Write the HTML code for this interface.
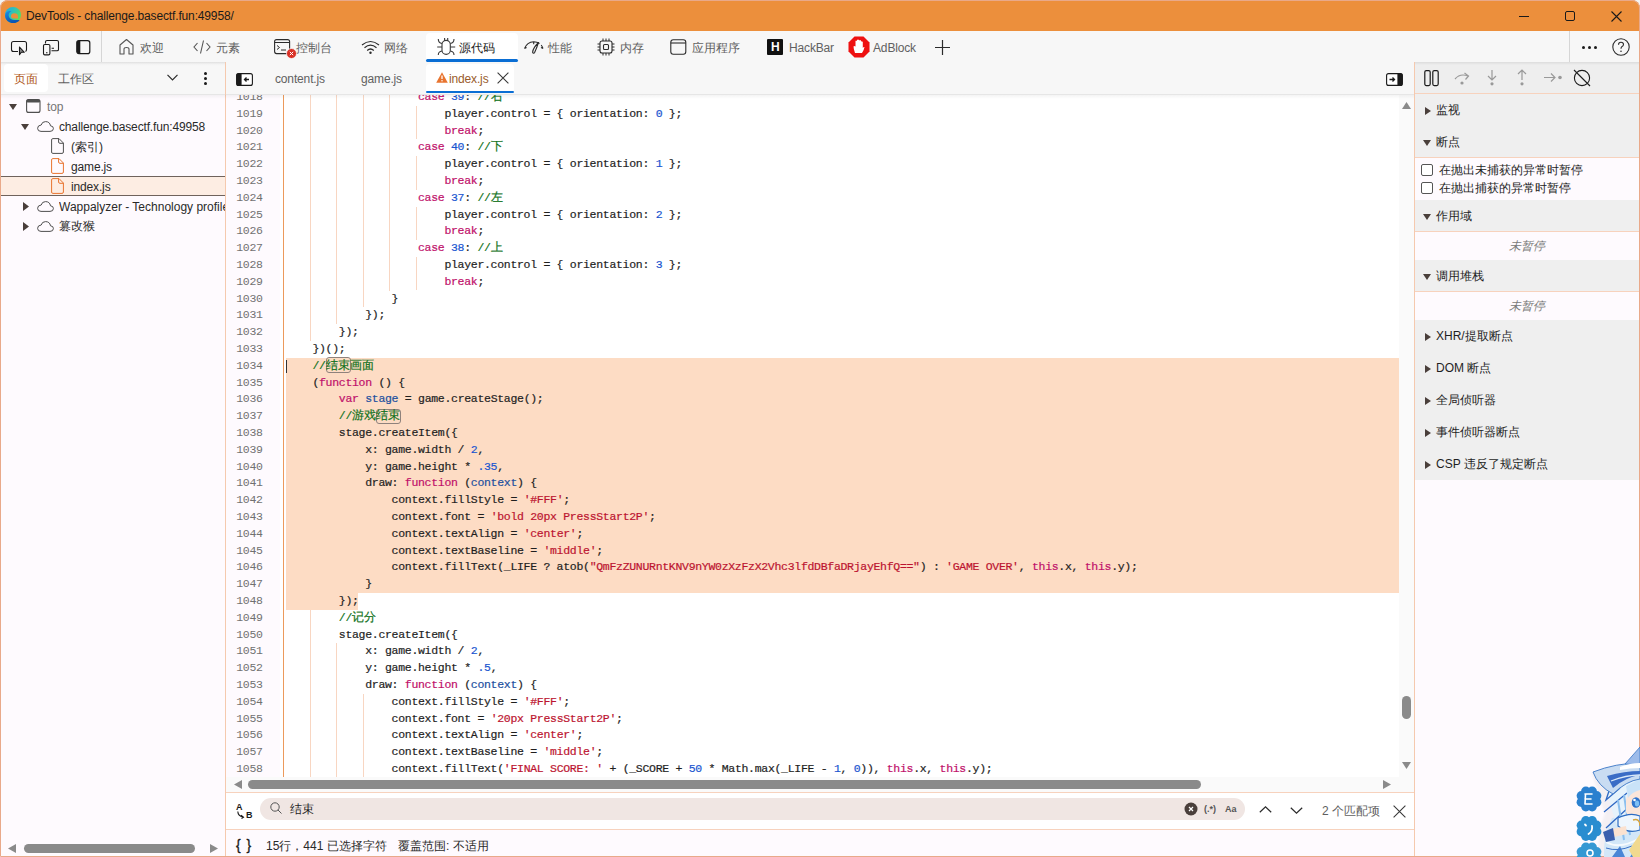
<!DOCTYPE html><html><head><meta charset="utf-8"><style>
*{box-sizing:border-box;margin:0;padding:0}
html,body{width:1640px;height:857px;overflow:hidden;background:#f3f3f3;font-family:"Liberation Sans",sans-serif;font-size:12px;color:#1f1f1f}
.a{position:absolute}
.t{position:absolute;white-space:pre;line-height:1}
svg{position:absolute;overflow:visible}
.code{position:absolute;font-family:"Liberation Mono",monospace;font-size:11.5px;letter-spacing:-0.3px;line-height:16.8px;height:16.8px;white-space:pre;color:#1f1f1f;-webkit-text-stroke:0.2px currentColor}
.cj{font-size:11.75px;letter-spacing:0}
.k{color:#c0106a}.n{color:#1a55d0}.c{color:#117220}.s{color:#bc1430}.v{color:#22509f}
.mb{position:absolute;border:1px solid #8f827c;border-radius:3px}
.ln{position:absolute;left:226px;width:36.6px;text-align:right;font-family:"Liberation Mono",monospace;font-size:11.5px;letter-spacing:-0.3px;line-height:16.8px;color:#717171}
.guide{position:absolute;width:1px;background:#f8d6c2}
.hdr{position:absolute;left:1415px;width:225px;height:32px;background:#efefef}
</style></head><body>
<div class="a" style="left:0;top:0;width:1640px;height:857px;background:#fefafe;border-radius:8px 8px 0 0"></div>
<div class="a" style="left:0;top:0;width:1640px;height:31px;background:#ec8f3c;border-radius:8px 8px 0 0"></div>
<svg style="left:5px;top:7px" width="16" height="16" viewBox="0 0 16 16">
<defs><linearGradient id="eg" x1="0" y1="0" x2="1" y2="0.6"><stop offset="0" stop-color="#1fa6ea"/><stop offset="0.5" stop-color="#2fc3b8"/><stop offset="1" stop-color="#5be05a"/></linearGradient>
<linearGradient id="eb" x1="0" y1="0" x2="0.3" y2="1"><stop offset="0" stop-color="#1c8fe6"/><stop offset="1" stop-color="#0a55b5"/></linearGradient></defs>
<circle cx="8" cy="8" r="8" fill="url(#eg)"/>
<path d="M0.1 8.5C0.3 4.5 3.5 3.2 6.5 4.2C4.2 5 3.3 7 3.8 9.3C4.4 12 7.2 13.3 10.5 13H14.6C13.3 15.2 10.8 16.1 8.3 16.1C3.8 16.1 0 12.8 0.1 8.5Z" fill="url(#eb)"/>
<path d="M6 9.2Q6 6.2 9.2 6.2Q13 6.2 13 9.6V11.4H8.4Q6 11.4 6 9.2Z" fill="#ec8f3c"/>
</svg>
<div class="t" style="left:26px;top:10px;font-size:12px;color:#1a1a1a;letter-spacing:-0.15px;">DevTools - challenge.basectf.fun:49958/</div>
<div class="a" style="left:1519px;top:16px;width:10px;height:1px;background:#1a1a1a"></div>
<div class="a" style="left:1565px;top:11px;width:10px;height:10px;border:1px solid #1a1a1a;border-radius:2px"></div>
<svg style="left:1611px;top:11px" width="11" height="11"><path d="M0.5 0.5L10.5 10.5M10.5 0.5L0.5 10.5" stroke="#1a1a1a" stroke-width="1.1"/></svg>
<div class="a" style="left:0;top:31px;width:1640px;height:31px;background:#f7f7f7"></div>
<div class="a" style="left:101px;top:31px;width:1px;height:31px;background:#d6d6d6"></div>
<div class="a" style="left:1569px;top:31px;width:1px;height:31px;background:#d6d6d6"></div>
<svg style="left:11px;top:40px" width="17" height="16" viewBox="0 0 17 16"><path d="M7 11.5H2.5Q0.5 11.5 0.5 9.5V3.5Q0.5 1.5 2.5 1.5H13.5Q15.5 1.5 15.5 3.5V9.5Q15.5 11 14.5 11.5" fill="none" stroke="#1a1a1a" stroke-width="1.1"/><path d="M8.5 7V14.8L10.3 12.3H13.3Z" fill="#888" stroke="#1a1a1a" stroke-width="1.1" stroke-linejoin="round"/></svg>
<svg style="left:43px;top:40px" width="17" height="16" viewBox="0 0 17 16"><path d="M2.5 3.5V2Q2.5 0.5 4 0.5H14Q15.5 0.5 15.5 2V9.5Q15.5 10.8 14 10.8H8.5" fill="none" stroke="#1a1a1a" stroke-width="1.1"/><rect x="0.5" y="4.5" width="6.4" height="10.4" rx="1.3" fill="#f7f7f7" stroke="#1a1a1a" stroke-width="1.1"/><path d="M3 12.7H4.5M8.6 8.3H11" stroke="#1a1a1a" stroke-width="1.1"/></svg>
<svg style="left:76px;top:40px" width="15" height="15" viewBox="0 0 15 15"><rect x="0.8" y="0.6" width="13" height="13" rx="2.2" fill="none" stroke="#1a1a1a" stroke-width="1.2"/><path d="M3 0.6H4.3V13.6H3Q0.8 13.6 0.8 11.4V2.8Q0.8 0.6 3 0.6Z" fill="#1a1a1a"/></svg>
<svg style="left:118px;top:38px" width="17" height="17" viewBox="0 0 17 17"><path d="M2 16V7L8.5 1.5L15 7V16H11V11Q11 9.5 8.5 9.5Q6 9.5 6 11V16Z" fill="none" stroke="#555" stroke-width="1.1" stroke-linejoin="round"/></svg>
<div class="t" style="left:140px;top:42px;font-size:12px;color:#616161;">欢迎</div>
<svg style="left:193px;top:40px" width="18" height="14" viewBox="0 0 18 14"><path d="M4.5 3L1 7L4.5 11M13.5 3L17 7L13.5 11M10.5 0.5L7.5 13.5" fill="none" stroke="#555" stroke-width="1.1"/></svg>
<div class="t" style="left:216px;top:42px;font-size:12px;color:#616161;">元素</div>
<svg style="left:274px;top:39px" width="24" height="20" viewBox="0 0 24 20"><rect x="0.6" y="0.6" width="15" height="14" rx="2" fill="none" stroke="#2b2b2b" stroke-width="1.1"/><path d="M0.6 3.5H15.6M3 6.5L5.5 8.5L3 10.5M7 11H12" fill="none" stroke="#2b2b2b" stroke-width="1"/><circle cx="17.5" cy="14.5" r="5" fill="#d93025" stroke="#f7f7f7" stroke-width="0.8"/><path d="M15.8 12.8L19.2 16.2M19.2 12.8L15.8 16.2" stroke="#fff" stroke-width="1"/></svg>
<div class="t" style="left:296px;top:42px;font-size:12px;color:#616161;">控制台</div>
<svg style="left:361px;top:40px" width="19" height="14" viewBox="0 0 19 14"><path d="M1 5Q9.5 -2 18 5M3.5 7.8Q9.5 2.5 15.5 7.8M6.2 10.5Q9.5 7.5 12.8 10.5" fill="none" stroke="#2b2b2b" stroke-width="1.2"/><circle cx="9.5" cy="12.8" r="1.2" fill="#2b2b2b"/></svg>
<div class="t" style="left:384px;top:42px;font-size:12px;color:#616161;">网络</div>
<div class="a" style="left:426px;top:33px;width:92px;height:29px;background:#ffffff;border-radius:4px 4px 0 0"></div>
<div class="a" style="left:426px;top:59px;width:92px;height:3px;background:#0a6ed4;border-radius:2px"></div>
<svg style="left:436px;top:37px" width="20" height="20" viewBox="0 0 20 20"><rect x="6" y="3.4" width="8.3" height="14" rx="4.1" fill="none" stroke="#3a3a3a" stroke-width="1.1"/><path d="M8.6 1V3.4M11.7 1V3.4M6 6.5Q2.3 6 2.3 2M14.3 6.5Q18 6 18 2M1.2 10H6M14.3 10H19.2M6 14Q2.3 14.5 2.3 18M14.3 14Q18 14.5 18 18" fill="none" stroke="#3a3a3a" stroke-width="1.1"/></svg>
<div class="t" style="left:459px;top:42px;font-size:12px;color:#1a1a1a;">源代码</div>
<svg style="left:523px;top:39px" width="21" height="16" viewBox="0 0 21 16"><path d="M1.5 9.5Q4 3 10.7 2.7Q14 2.8 16.5 4.5M18.2 6Q19.3 7.5 20 9.5M1.5 9.5L3.6 8.6M10.7 2.7V5.2M20 9.5L18 8.6" fill="none" stroke="#2b2b2b" stroke-width="1.1"/><path d="M9.6 13.2Q10 9 15.5 3.5Q13.5 9.5 11.6 13.6Q10.5 15 9.6 13.2Z" fill="none" stroke="#2b2b2b" stroke-width="1.1" stroke-linejoin="round"/></svg>
<div class="t" style="left:548px;top:42px;font-size:12px;color:#616161;">性能</div>
<svg style="left:597px;top:38px" width="18" height="18" viewBox="0 0 18 18"><rect x="3" y="3" width="12" height="12" rx="2" fill="none" stroke="#2b2b2b" stroke-width="1.1"/><rect x="6.5" y="6.5" width="5" height="5" rx="1" fill="none" stroke="#2b2b2b" stroke-width="1.1"/><path d="M6 0.5V3M9 0.5V3M12 0.5V3M6 15V17.5M9 15V17.5M12 15V17.5M0.5 6H3M0.5 9H3M0.5 12H3M15 6H17.5M15 9H17.5M15 12H17.5" stroke="#2b2b2b" stroke-width="1"/></svg>
<div class="t" style="left:620px;top:42px;font-size:12px;color:#616161;">内存</div>
<svg style="left:670px;top:39px" width="17" height="16" viewBox="0 0 17 16"><rect x="0.8" y="0.8" width="15" height="14.4" rx="2.5" fill="none" stroke="#2b2b2b" stroke-width="1.1"/><path d="M0.8 4H15.8" stroke="#2b2b2b" stroke-width="1.1"/></svg>
<div class="t" style="left:692px;top:42px;font-size:12px;color:#616161;">应用程序</div>
<div class="a" style="left:767px;top:39px;width:16px;height:16px;background:#111;border-radius:1px"></div>
<div class="t" style="left:771px;top:41px;font-size:12px;font-weight:bold;color:#fff">H</div>
<div class="t" style="left:789px;top:42px;font-size:12px;color:#616161;letter-spacing:-0.15px;">HackBar</div>
<svg style="left:848px;top:36px" width="22" height="22" viewBox="0 0 22 22"><path d="M6.5 0.5H15.5L21.5 6.5V15.5L15.5 21.5H6.5L0.5 15.5V6.5Z" fill="#e11"/><path d="M7 17Q5.5 13 5.5 10.5Q6 9.5 7.5 10.5V5Q8 4 9 5V4Q10 3 11 4V4.5Q12 3.5 13 4.5V5.5Q14 5 14.8 6V12Q15.5 10.5 16.5 11Q16 14 14 17Z" fill="#fff"/></svg>
<div class="t" style="left:873px;top:42px;font-size:12px;color:#616161;letter-spacing:-0.15px;">AdBlock</div>
<svg style="left:935px;top:40px" width="15" height="15"><path d="M7.5 0V15M0 7.5H15" stroke="#2b2b2b" stroke-width="1.2"/></svg>
<div class="a" style="left:1582px;top:46px;width:3px;height:3px;border-radius:50%;background:#1a1a1a"></div>
<div class="a" style="left:1588px;top:46px;width:3px;height:3px;border-radius:50%;background:#1a1a1a"></div>
<div class="a" style="left:1594px;top:46px;width:3px;height:3px;border-radius:50%;background:#1a1a1a"></div>
<svg style="left:1612px;top:38px" width="18" height="18" viewBox="0 0 18 18"><circle cx="9" cy="9" r="8.2" fill="none" stroke="#2b2b2b" stroke-width="1.1"/><path d="M6.5 6.8Q6.5 4.3 9 4.3Q11.5 4.3 11.5 6.5Q11.5 8 9.8 8.8Q9 9.3 9 10.8" fill="none" stroke="#2b2b2b" stroke-width="1.1"/><circle cx="9" cy="13.2" r="0.8" fill="#2b2b2b"/></svg>
<div class="a" style="left:0;top:62px;width:225px;height:32px;background:#f7f7f7"></div>
<div class="a" style="left:0;top:62px;width:1640px;height:4px;background:linear-gradient(#dedede,#e9e9e9 25%,#f3f3f3 60%,rgba(247,247,247,0))"></div>
<div class="a" style="left:4px;top:64px;width:44px;height:28px;background:#fff;border-radius:4px"></div>
<div class="t" style="left:14px;top:73px;font-size:12px;color:#b05a1c;">页面</div>
<div class="t" style="left:58px;top:73px;font-size:12px;color:#616161;">工作区</div>
<svg style="left:167px;top:74px" width="11" height="7"><path d="M0.5 0.8L5.5 5.8L10.5 0.8" fill="none" stroke="#2b2b2b" stroke-width="1.2"/></svg>
<div class="a" style="left:203.5px;top:72px;width:3px;height:3px;border-radius:50%;background:#1a1a1a"></div>
<div class="a" style="left:203.5px;top:77px;width:3px;height:3px;border-radius:50%;background:#1a1a1a"></div>
<div class="a" style="left:203.5px;top:82px;width:3px;height:3px;border-radius:50%;background:#1a1a1a"></div>
<div class="a" style="left:0;top:94px;width:225px;height:1px;background:#e6e6e6"></div>
<svg style="left:9px;top:104px" width="8" height="6"><path d="M0 0H8L4.0 6Z" fill="#4a3f3b"/></svg>
<svg style="left:26px;top:99px" width="15" height="14" viewBox="0 0 15 14"><rect x="0.6" y="0.6" width="13.4" height="12.8" rx="2" fill="none" stroke="#4f4f4f" stroke-width="1.1"/><rect x="0.6" y="0.6" width="13.4" height="3" rx="1" fill="#4f4f4f"/></svg>
<div class="t" style="left:47px;top:101px;font-size:12px;color:#757575;letter-spacing:-0.15px;">top</div>
<svg style="left:21px;top:124px" width="8" height="6"><path d="M0 0H8L4.0 6Z" fill="#4a3f3b"/></svg>
<svg style="left:37px;top:121px" width="17" height="11" viewBox="0 0 17 11"><path d="M4 10.4H13Q16.4 10.4 16.4 7.5Q16.4 5 13.5 4.8Q12.8 0.6 8.5 0.6Q5 0.6 4.2 4Q0.6 4.3 0.6 7.3Q0.6 10.4 4 10.4Z" fill="none" stroke="#4f4f4f" stroke-width="1"/></svg>
<div class="t" style="left:59px;top:121px;font-size:12px;color:#2a2a2a;letter-spacing:-0.15px;">challenge.basectf.fun:49958</div>
<svg style="left:51px;top:138px" width="13" height="16" viewBox="0 0 13 16"><path d="M1.8 0.6H8L12.4 5V14Q12.4 15.4 11 15.4H1.8Q0.6 15.4 0.6 14V2Q0.6 0.6 1.8 0.6Z M7.6 0.6V4Q7.6 5.3 8.9 5.3H12.4" fill="none" stroke="#4f4f4f" stroke-width="1"/></svg>
<div class="t" style="left:71px;top:141px;font-size:12px;color:#2a2a2a;">(索引)</div>
<svg style="left:51px;top:158px" width="13" height="16" viewBox="0 0 13 16"><path d="M1.8 0.6H8L12.4 5V14Q12.4 15.4 11 15.4H1.8Q0.6 15.4 0.6 14V2Q0.6 0.6 1.8 0.6Z M7.6 0.6V4Q7.6 5.3 8.9 5.3H12.4" fill="none" stroke="#e8742f" stroke-width="1"/></svg>
<div class="t" style="left:71px;top:161px;font-size:12px;color:#2a2a2a;letter-spacing:-0.15px;">game.js</div>
<div class="a" style="left:1px;top:176px;width:224px;height:20px;background:#fdede3;border-top:1px solid #6f625c;border-bottom:1px solid #6f625c"></div>
<svg style="left:51px;top:178px" width="13" height="16" viewBox="0 0 13 16"><path d="M1.8 0.6H8L12.4 5V14Q12.4 15.4 11 15.4H1.8Q0.6 15.4 0.6 14V2Q0.6 0.6 1.8 0.6Z M7.6 0.6V4Q7.6 5.3 8.9 5.3H12.4" fill="none" stroke="#e8742f" stroke-width="1"/></svg>
<div class="t" style="left:71px;top:181px;font-size:12px;color:#2a2a2a;letter-spacing:-0.15px;">index.js</div>
<svg style="left:23px;top:202px" width="6" height="9"><path d="M0 0L6 4.5L0 9Z" fill="#4a3f3b"/></svg>
<svg style="left:37px;top:201px" width="17" height="11" viewBox="0 0 17 11"><path d="M4 10.4H13Q16.4 10.4 16.4 7.5Q16.4 5 13.5 4.8Q12.8 0.6 8.5 0.6Q5 0.6 4.2 4Q0.6 4.3 0.6 7.3Q0.6 10.4 4 10.4Z" fill="none" stroke="#4f4f4f" stroke-width="1"/></svg>
<div class="a" style="left:59px;top:200px;width:166px;height:16px;overflow:hidden"><div class="t" style="left:0;top:1px;font-size:12px;color:#2a2a2a">Wappalyzer - Technology profiler</div></div>
<svg style="left:23px;top:222px" width="6" height="9"><path d="M0 0L6 4.5L0 9Z" fill="#4a3f3b"/></svg>
<svg style="left:37px;top:221px" width="17" height="11" viewBox="0 0 17 11"><path d="M4 10.4H13Q16.4 10.4 16.4 7.5Q16.4 5 13.5 4.8Q12.8 0.6 8.5 0.6Q5 0.6 4.2 4Q0.6 4.3 0.6 7.3Q0.6 10.4 4 10.4Z" fill="none" stroke="#4f4f4f" stroke-width="1"/></svg>
<div class="t" style="left:59px;top:220px;font-size:12px;color:#2a2a2a;">篡改猴</div>
<svg style="left:8px;top:844px" width="8" height="9"><path d="M8 0V9L0 4.5Z" fill="#8a8a8a"/></svg>
<div class="a" style="left:24px;top:844px;width:171px;height:9px;background:#8a8a8a;border-radius:4.5px"></div>
<svg style="left:210px;top:844px" width="8" height="9"><path d="M0 0V9L8 4.5Z" fill="#8a8a8a"/></svg>
<div class="a" style="left:225px;top:62px;width:1px;height:795px;background:#f5c9ae"></div>
<div class="a" style="left:226px;top:62px;width:1188px;height:32px;background:#f7f7f7"></div>
<div class="a" style="left:226px;top:94px;width:1188px;height:1px;background:#e6e6e6"></div>
<svg style="left:236px;top:73px" width="17" height="13" viewBox="0 0 17 13"><rect x="0.6" y="0.6" width="15.8" height="11.8" rx="2" fill="#fff" stroke="#1a1a1a" stroke-width="1.1"/><rect x="0.6" y="0.6" width="5" height="11.8" rx="1" fill="#1a1a1a"/><path d="M13 6.5H8.5M10.5 4.5L8.5 6.5L10.5 8.5" fill="none" stroke="#1a1a1a" stroke-width="1.3"/></svg>
<div class="t" style="left:275px;top:73px;font-size:12px;color:#616161;letter-spacing:-0.15px;">content.js</div>
<div class="t" style="left:361px;top:73px;font-size:12px;color:#616161;letter-spacing:-0.15px;">game.js</div>
<div class="a" style="left:426px;top:64px;width:88px;height:29px;background:#ffffff;border-radius:4px 4px 0 0"></div>
<div class="a" style="left:426px;top:91px;width:88px;height:2px;background:#0a6ed4;border-radius:1px"></div>
<svg style="left:436px;top:72px" width="12" height="11" viewBox="0 0 12 11"><path d="M6 0.3L11.8 10.7H0.2Z" fill="#e8742f"/><path d="M6 3.5V7" stroke="#fff" stroke-width="1.3"/><circle cx="6" cy="8.8" r="0.75" fill="#fff"/></svg>
<div class="t" style="left:449px;top:73px;font-size:12px;color:#9a5c2c;letter-spacing:-0.15px;">index.js</div>
<svg style="left:497px;top:72px" width="12" height="12"><path d="M0.6 0.6L11.4 11.4M11.4 0.6L0.6 11.4" stroke="#3a3a3a" stroke-width="1.1"/></svg>
<svg style="left:1386px;top:73px" width="17" height="13" viewBox="0 0 17 13"><rect x="0.6" y="0.6" width="15.8" height="11.8" rx="2" fill="#fff" stroke="#1a1a1a" stroke-width="1.1"/><rect x="11.4" y="0.6" width="5" height="11.8" rx="1" fill="#1a1a1a"/><path d="M3.5 6.5H8.5M6.5 4.5L8.5 6.5L6.5 8.5" fill="none" stroke="#1a1a1a" stroke-width="1.3"/></svg>
<div class="a" style="left:226px;top:95px;width:1188px;height:682px;background:#ffffff;overflow:hidden">
<div class="a" style="left:0;top:0;width:54px;height:683px;background:#fefafe"></div>
<div class="a" style="left:57px;top:0;width:1px;height:683px;background:#ec9a5b"></div>
<div class="a" style="left:60.0px;top:262.70000000000005px;width:1113.0px;height:235.19999999999993px;background:#fddcc4"></div>
<div class="a" style="left:60.0px;top:497.9px;width:72.0px;height:16.8px;background:#fddcc4"></div>
<div class="guide" style="left:84px;top:-6.099999999999994px;height:252.0px"></div>
<div class="guide" style="left:110px;top:-6.099999999999994px;height:235.20000000000002px"></div>
<div class="guide" style="left:137px;top:-6.099999999999994px;height:218.4px"></div>
<div class="guide" style="left:163px;top:-6.099999999999994px;height:201.60000000000002px"></div>
<div class="guide" style="left:190px;top:10.700000000000003px;height:33.6px"></div>
<div class="guide" style="left:190px;top:61.10000000000002px;height:33.6px"></div>
<div class="guide" style="left:190px;top:111.5px;height:33.6px"></div>
<div class="guide" style="left:190px;top:161.89999999999998px;height:33.6px"></div>
<div class="guide" style="left:84px;top:514.7px;height:168.0px"></div>
<div class="guide" style="left:110px;top:548.3px;height:134.4px"></div>
<div class="guide" style="left:137px;top:598.7px;height:84.0px"></div>
<div class="mb" style="left:99.5px;top:262.3px;width:25px;height:15.5px"></div>
<div class="mb" style="left:149.5px;top:313.5px;width:25px;height:15.5px"></div>
<div class="a" style="left:60px;top:264.70000000000005px;width:1px;height:13px;background:#333"></div>
<div class="ln" style="left:0;top:-6.099999999999994px">1018</div>
<div class="code" style="left:192.0px;top:-6.099999999999994px"><span class="k">case</span> <span class="n">39</span>: <span class="c">//<span class="cj">右</span></span></div>
<div class="ln" style="left:0;top:10.700000000000003px">1019</div>
<div class="code" style="left:218.39999999999998px;top:10.700000000000003px">player.control = { orientation: <span class="n">0</span> };</div>
<div class="ln" style="left:0;top:27.5px">1020</div>
<div class="code" style="left:218.39999999999998px;top:27.5px"><span class="k">break</span>;</div>
<div class="ln" style="left:0;top:44.30000000000001px">1021</div>
<div class="code" style="left:192.0px;top:44.30000000000001px"><span class="k">case</span> <span class="n">40</span>: <span class="c">//<span class="cj">下</span></span></div>
<div class="ln" style="left:0;top:61.10000000000002px">1022</div>
<div class="code" style="left:218.39999999999998px;top:61.10000000000002px">player.control = { orientation: <span class="n">1</span> };</div>
<div class="ln" style="left:0;top:77.9px">1023</div>
<div class="code" style="left:218.39999999999998px;top:77.9px"><span class="k">break</span>;</div>
<div class="ln" style="left:0;top:94.70000000000002px">1024</div>
<div class="code" style="left:192.0px;top:94.70000000000002px"><span class="k">case</span> <span class="n">37</span>: <span class="c">//<span class="cj">左</span></span></div>
<div class="ln" style="left:0;top:111.5px">1025</div>
<div class="code" style="left:218.39999999999998px;top:111.5px">player.control = { orientation: <span class="n">2</span> };</div>
<div class="ln" style="left:0;top:128.3px">1026</div>
<div class="code" style="left:218.39999999999998px;top:128.3px"><span class="k">break</span>;</div>
<div class="ln" style="left:0;top:145.10000000000002px">1027</div>
<div class="code" style="left:192.0px;top:145.10000000000002px"><span class="k">case</span> <span class="n">38</span>: <span class="c">//<span class="cj">上</span></span></div>
<div class="ln" style="left:0;top:161.89999999999998px">1028</div>
<div class="code" style="left:218.39999999999998px;top:161.89999999999998px">player.control = { orientation: <span class="n">3</span> };</div>
<div class="ln" style="left:0;top:178.70000000000005px">1029</div>
<div class="code" style="left:218.39999999999998px;top:178.70000000000005px"><span class="k">break</span>;</div>
<div class="ln" style="left:0;top:195.5px">1030</div>
<div class="code" style="left:165.6px;top:195.5px">}</div>
<div class="ln" style="left:0;top:212.3px">1031</div>
<div class="code" style="left:139.2px;top:212.3px">});</div>
<div class="ln" style="left:0;top:229.10000000000002px">1032</div>
<div class="code" style="left:112.8px;top:229.10000000000002px">});</div>
<div class="ln" style="left:0;top:245.89999999999998px">1033</div>
<div class="code" style="left:86.4px;top:245.89999999999998px">})();</div>
<div class="ln" style="left:0;top:262.70000000000005px">1034</div>
<div class="code" style="left:86.4px;top:262.70000000000005px"><span class="c">//</span><span class="c m"><span class="cj">结束</span></span><span class="c"><span class="cj">画面</span></span></div>
<div class="ln" style="left:0;top:279.5px">1035</div>
<div class="code" style="left:86.4px;top:279.5px">(<span class="k">function</span> () {</div>
<div class="ln" style="left:0;top:296.30000000000007px">1036</div>
<div class="code" style="left:112.8px;top:296.30000000000007px"><span class="k">var</span> <span class="v">stage</span> = game.createStage();</div>
<div class="ln" style="left:0;top:313.1px">1037</div>
<div class="code" style="left:112.8px;top:313.1px"><span class="c">//<span class="cj">游戏</span></span><span class="c m"><span class="cj">结束</span></span></div>
<div class="ln" style="left:0;top:329.9px">1038</div>
<div class="code" style="left:112.8px;top:329.9px">stage.createItem({</div>
<div class="ln" style="left:0;top:346.70000000000005px">1039</div>
<div class="code" style="left:139.2px;top:346.70000000000005px">x: game.width / <span class="n">2</span>,</div>
<div class="ln" style="left:0;top:363.5px">1040</div>
<div class="code" style="left:139.2px;top:363.5px">y: game.height * <span class="n">.35</span>,</div>
<div class="ln" style="left:0;top:380.30000000000007px">1041</div>
<div class="code" style="left:139.2px;top:380.30000000000007px">draw: <span class="k">function</span> (<span class="v">context</span>) {</div>
<div class="ln" style="left:0;top:397.1px">1042</div>
<div class="code" style="left:165.6px;top:397.1px">context.fillStyle = <span class="s">'#FFF'</span>;</div>
<div class="ln" style="left:0;top:413.9px">1043</div>
<div class="code" style="left:165.6px;top:413.9px">context.font = <span class="s">'bold 20px PressStart2P'</span>;</div>
<div class="ln" style="left:0;top:430.70000000000005px">1044</div>
<div class="code" style="left:165.6px;top:430.70000000000005px">context.textAlign = <span class="s">'center'</span>;</div>
<div class="ln" style="left:0;top:447.5px">1045</div>
<div class="code" style="left:165.6px;top:447.5px">context.textBaseline = <span class="s">'middle'</span>;</div>
<div class="ln" style="left:0;top:464.30000000000007px">1046</div>
<div class="code" style="left:165.6px;top:464.30000000000007px">context.fillText(_LIFE ? atob(<span class="s">"QmFzZUNURntKNV9nYW0zXzFzX2Vhc3lfdDBfaDRjayEhfQ=="</span>) : <span class="s">'GAME OVER'</span>, <span class="k">this</span>.x, <span class="k">this</span>.y);</div>
<div class="ln" style="left:0;top:481.1px">1047</div>
<div class="code" style="left:139.2px;top:481.1px">}</div>
<div class="ln" style="left:0;top:497.9px">1048</div>
<div class="code" style="left:112.8px;top:497.9px">});</div>
<div class="ln" style="left:0;top:514.7px">1049</div>
<div class="code" style="left:112.8px;top:514.7px"><span class="c">//<span class="cj">记分</span></span></div>
<div class="ln" style="left:0;top:531.5px">1050</div>
<div class="code" style="left:112.8px;top:531.5px">stage.createItem({</div>
<div class="ln" style="left:0;top:548.3px">1051</div>
<div class="code" style="left:139.2px;top:548.3px">x: game.width / <span class="n">2</span>,</div>
<div class="ln" style="left:0;top:565.1px">1052</div>
<div class="code" style="left:139.2px;top:565.1px">y: game.height * <span class="n">.5</span>,</div>
<div class="ln" style="left:0;top:581.9px">1053</div>
<div class="code" style="left:139.2px;top:581.9px">draw: <span class="k">function</span> (<span class="v">context</span>) {</div>
<div class="ln" style="left:0;top:598.7px">1054</div>
<div class="code" style="left:165.6px;top:598.7px">context.fillStyle = <span class="s">'#FFF'</span>;</div>
<div class="ln" style="left:0;top:615.5px">1055</div>
<div class="code" style="left:165.6px;top:615.5px">context.font = <span class="s">'20px PressStart2P'</span>;</div>
<div class="ln" style="left:0;top:632.3px">1056</div>
<div class="code" style="left:165.6px;top:632.3px">context.textAlign = <span class="s">'center'</span>;</div>
<div class="ln" style="left:0;top:649.1px">1057</div>
<div class="code" style="left:165.6px;top:649.1px">context.textBaseline = <span class="s">'middle'</span>;</div>
<div class="ln" style="left:0;top:665.9px">1058</div>
<div class="code" style="left:165.6px;top:665.9px">context.fillText(<span class="s">'FINAL SCORE: '</span> + (_SCORE + <span class="n">50</span> * Math.max(_LIFE - <span class="n">1</span>, <span class="n">0</span>)), <span class="k">this</span>.x, <span class="k">this</span>.y);</div>
<div class="a" style="left:1173px;top:0;width:15px;height:683px;background:#fafafa"></div>
<svg style="left:1176px;top:7px" width="9" height="7"><path d="M0 7H9L4.5 0Z" fill="#8a8a8a"/></svg>
<div class="a" style="left:1176px;top:601px;width:9px;height:23px;background:#8a8a8a;border-radius:4.5px"></div>
<svg style="left:1176px;top:667px" width="9" height="7"><path d="M0 0H9L4.5 7Z" fill="#8a8a8a"/></svg>
</div>
<div class="a" style="left:0;top:95px;width:1414px;height:4px;background:linear-gradient(rgba(0,0,0,0.045),rgba(0,0,0,0))"></div>
<div class="a" style="left:226px;top:777px;width:1188px;height:15px;background:#fafafa"></div>
<svg style="left:234px;top:780px" width="8" height="9"><path d="M8 0V9L0 4.5Z" fill="#8a8a8a"/></svg>
<div class="a" style="left:248px;top:780px;width:953px;height:9px;background:#8a8a8a;border-radius:4.5px"></div>
<svg style="left:1383px;top:780px" width="8" height="9"><path d="M0 0V9L8 4.5Z" fill="#8a8a8a"/></svg>
<div class="a" style="left:226px;top:792px;width:1188px;height:1px;background:#f7d2bd"></div>
<div class="a" style="left:226px;top:793px;width:1188px;height:36px;background:#fff"></div>
<div class="t" style="left:236px;top:803px;font-size:9px;font-weight:bold;color:#1a1a1a">A</div>
<div class="t" style="left:246px;top:811px;font-size:9px;font-weight:bold;color:#1a1a1a">B</div>
<svg style="left:237px;top:811px" width="9" height="8"><path d="M0.8 0.5Q1 5 6 6M4 4.2L6.5 6.2L4.5 7.5" fill="none" stroke="#1a1a1a" stroke-width="1.1"/></svg>
<div class="a" style="left:260px;top:798px;width:985px;height:22px;background:#f0e6e3;border-radius:11px"></div>
<svg style="left:270px;top:802px" width="13" height="12"><circle cx="5" cy="5" r="4.2" fill="none" stroke="#555" stroke-width="1"/><path d="M8 8L11.5 11.5" stroke="#555" stroke-width="1"/></svg>
<div class="t" style="left:290px;top:803px;font-size:12px;color:#1f1f1f;">结束</div>
<svg style="left:1184px;top:802px" width="14" height="14"><circle cx="7" cy="7" r="6.5" fill="#4a3f3b"/><path d="M5 5L9 9M9 5L5 9" stroke="#fff" stroke-width="1.2"/></svg>
<div class="t" style="left:1204px;top:805px;font-size:9px;font-weight:bold;color:#555">(.*)</div>
<div class="t" style="left:1225px;top:805px;font-size:9px;font-weight:bold;color:#555">Aa</div>
<svg style="left:1259px;top:806px" width="13" height="7"><path d="M0.8 6.2L6.5 0.8L12.2 6.2" fill="none" stroke="#2b2b2b" stroke-width="1.2"/></svg>
<svg style="left:1290px;top:807px" width="13" height="7"><path d="M0.8 0.8L6.5 6.2L12.2 0.8" fill="none" stroke="#2b2b2b" stroke-width="1.2"/></svg>
<div class="t" style="left:1322px;top:805px;font-size:12px;color:#5f5f5f;">2 个匹配项</div>
<svg style="left:1393px;top:805px" width="13" height="13"><path d="M0.6 0.6L12.4 12.4M12.4 0.6L0.6 12.4" stroke="#3a3a3a" stroke-width="1.1"/></svg>
<div class="a" style="left:226px;top:829px;width:1188px;height:1px;background:#f7d2bd"></div>
<div class="a" style="left:226px;top:830px;width:1188px;height:27px;background:#fefafe"></div>
<div class="t" style="left:236px;top:838px;font-size:14px;color:#1a1a1a;-webkit-text-stroke:0.3px #1a1a1a">{</div>
<div class="t" style="left:246.5px;top:838px;font-size:14px;color:#1a1a1a;-webkit-text-stroke:0.3px #1a1a1a">}</div>
<div class="t" style="left:266px;top:840px;font-size:12px;color:#2a2a2a;">15行，441 已选择字符</div>
<div class="t" style="left:398px;top:840px;font-size:12px;color:#2a2a2a;">覆盖范围: 不适用</div>
<div class="a" style="left:1414px;top:62px;width:226px;height:795px;background:#fefafe"></div>
<div class="a" style="left:1414px;top:62px;width:226px;height:31px;background:#eeeeee"></div>
<div class="a" style="left:1414px;top:62px;width:226px;height:3px;background:linear-gradient(#dcdcdc,rgba(238,238,238,0))"></div>
<div class="a" style="left:1414px;top:93px;width:226px;height:1px;background:#f7d2bd"></div>
<svg style="left:1424px;top:70px" width="17" height="17" viewBox="0 0 17 17"><rect x="0.8" y="0.6" width="5.4" height="15" rx="1.5" fill="none" stroke="#1a1a1a" stroke-width="1.2"/><rect x="8.8" y="0.6" width="5.4" height="15" rx="1.5" fill="none" stroke="#1a1a1a" stroke-width="1.2"/></svg>
<svg style="left:1454px;top:70px" width="18" height="16" viewBox="0 0 18 16"><path d="M1 9Q6 3 14 6" fill="none" stroke="#999" stroke-width="1.2"/><path d="M10.5 3L14.5 6L11.5 9.5" fill="none" stroke="#999" stroke-width="1.2"/><circle cx="8" cy="13" r="1.6" fill="#999"/></svg>
<svg style="left:1486px;top:69px" width="12" height="17" viewBox="0 0 12 17"><path d="M6 1V11M2 7L6 11L10 7" fill="none" stroke="#999" stroke-width="1.2"/><circle cx="6" cy="14.8" r="1.6" fill="#999"/></svg>
<svg style="left:1516px;top:69px" width="12" height="17" viewBox="0 0 12 17"><path d="M6 11V1M2 5L6 1L10 5" fill="none" stroke="#999" stroke-width="1.2"/><circle cx="6" cy="14.8" r="1.6" fill="#999"/></svg>
<svg style="left:1543px;top:71px" width="20" height="13" viewBox="0 0 20 13"><path d="M1 6.5H12M8 2.5L12 6.5L8 10.5" fill="none" stroke="#999" stroke-width="1.2"/><circle cx="17" cy="6.5" r="1.8" fill="#999"/></svg>
<svg style="left:1573px;top:69px" width="18" height="18" viewBox="0 0 18 18"><circle cx="9" cy="9" r="7.6" fill="none" stroke="#1a1a1a" stroke-width="1.1"/><path d="M1 1L17 17" stroke="#1a1a1a" stroke-width="1.1"/></svg>
<div class="hdr" style="top:94px"></div>
<svg style="left:1425px;top:107px" width="6" height="8"><path d="M0 0L6 4.0L0 8Z" fill="#4a3f3b"/></svg>
<div class="t" style="left:1436px;top:104px;font-size:12px;color:#1f1f1f;">监视</div>
<div class="hdr" style="top:126px"></div>
<svg style="left:1423px;top:140px" width="8" height="6"><path d="M0 0H8L4.0 6Z" fill="#4a3f3b"/></svg>
<div class="t" style="left:1436px;top:136px;font-size:12px;color:#1f1f1f;">断点</div>
<div class="a" style="left:1414px;top:157px;width:226px;height:1px;background:#f7d2bd"></div>
<div class="a" style="left:1421px;top:164px;width:12px;height:12px;border:1px solid #555;border-radius:2px;background:#fff"></div>
<div class="t" style="left:1439px;top:164px;font-size:12px;color:#1f1f1f;">在抛出未捕获的异常时暂停</div>
<div class="a" style="left:1421px;top:182px;width:12px;height:12px;border:1px solid #555;border-radius:2px;background:#fff"></div>
<div class="t" style="left:1439px;top:182px;font-size:12px;color:#1f1f1f;">在抛出捕获的异常时暂停</div>
<div class="a" style="left:1414px;top:200px;width:226px;height:1px;background:#f7d2bd"></div>
<div class="hdr" style="top:200px"></div>
<svg style="left:1423px;top:214px" width="8" height="6"><path d="M0 0H8L4.0 6Z" fill="#4a3f3b"/></svg>
<div class="t" style="left:1436px;top:210px;font-size:12px;color:#1f1f1f;">作用域</div>
<div class="a" style="left:1414px;top:231px;width:226px;height:1px;background:#f7d2bd"></div>
<div class="t" style="left:1509px;top:240px;font-size:12px;color:#7a7a7a;font-style:italic">未暂停</div>
<div class="hdr" style="top:260px"></div>
<svg style="left:1423px;top:274px" width="8" height="6"><path d="M0 0H8L4.0 6Z" fill="#4a3f3b"/></svg>
<div class="t" style="left:1436px;top:270px;font-size:12px;color:#1f1f1f;">调用堆栈</div>
<div class="a" style="left:1414px;top:291px;width:226px;height:1px;background:#f7d2bd"></div>
<div class="t" style="left:1509px;top:300px;font-size:12px;color:#7a7a7a;font-style:italic">未暂停</div>
<div class="hdr" style="top:320px"></div>
<svg style="left:1425px;top:333px" width="6" height="8"><path d="M0 0L6 4.0L0 8Z" fill="#4a3f3b"/></svg>
<div class="t" style="left:1436px;top:330px;font-size:12px;color:#1f1f1f;">XHR/提取断点</div>
<div class="hdr" style="top:352px"></div>
<svg style="left:1425px;top:365px" width="6" height="8"><path d="M0 0L6 4.0L0 8Z" fill="#4a3f3b"/></svg>
<div class="t" style="left:1436px;top:362px;font-size:12px;color:#1f1f1f;">DOM 断点</div>
<div class="hdr" style="top:384px"></div>
<svg style="left:1425px;top:397px" width="6" height="8"><path d="M0 0L6 4.0L0 8Z" fill="#4a3f3b"/></svg>
<div class="t" style="left:1436px;top:394px;font-size:12px;color:#1f1f1f;">全局侦听器</div>
<div class="hdr" style="top:416px"></div>
<svg style="left:1425px;top:429px" width="6" height="8"><path d="M0 0L6 4.0L0 8Z" fill="#4a3f3b"/></svg>
<div class="t" style="left:1436px;top:426px;font-size:12px;color:#1f1f1f;">事件侦听器断点</div>
<div class="hdr" style="top:448px"></div>
<svg style="left:1425px;top:461px" width="6" height="8"><path d="M0 0L6 4.0L0 8Z" fill="#4a3f3b"/></svg>
<div class="t" style="left:1436px;top:458px;font-size:12px;color:#1f1f1f;">CSP 违反了规定断点</div>
<div class="a" style="left:1414px;top:62px;width:1px;height:795px;background:#f5c9ae"></div>
<div class="a" style="left:0;top:0;width:1640px;height:857px;border:1px solid #e9a98a;border-radius:8px 8px 0 0;pointer-events:none"></div>
<svg style="left:1560px;top:730px" width="80" height="127" viewBox="1560 730 80 127"><defs><filter id="sh" x="-20%" y="-20%" width="140%" height="140%"><feGaussianBlur stdDeviation="1.2"/></filter></defs><path d="M1593 772Q1615 764 1640 762V857H1600Q1598 830 1606 812Q1598 790 1593 772Z" fill="#000" opacity="0.04" filter="url(#sh)" transform="translate(-1,1)"/><circle cx="1589" cy="799" r="9.5" fill="#2a80cf"/><circle cx="1596.58" cy="802.14" r="4.8" fill="#2a80cf"/><circle cx="1592.14" cy="806.58" r="4.8" fill="#2a80cf"/><circle cx="1585.86" cy="806.58" r="4.8" fill="#2a80cf"/><circle cx="1581.42" cy="802.14" r="4.8" fill="#2a80cf"/><circle cx="1581.42" cy="795.86" r="4.8" fill="#2a80cf"/><circle cx="1585.86" cy="791.42" r="4.8" fill="#2a80cf"/><circle cx="1592.14" cy="791.42" r="4.8" fill="#2a80cf"/><circle cx="1596.58" cy="795.86" r="4.8" fill="#2a80cf"/><circle cx="1589" cy="828.5" r="9.5" fill="#2a8dd0"/><circle cx="1596.58" cy="831.64" r="4.8" fill="#2a8dd0"/><circle cx="1592.14" cy="836.08" r="4.8" fill="#2a8dd0"/><circle cx="1585.86" cy="836.08" r="4.8" fill="#2a8dd0"/><circle cx="1581.42" cy="831.64" r="4.8" fill="#2a8dd0"/><circle cx="1581.42" cy="825.36" r="4.8" fill="#2a8dd0"/><circle cx="1585.86" cy="820.92" r="4.8" fill="#2a8dd0"/><circle cx="1592.14" cy="820.92" r="4.8" fill="#2a8dd0"/><circle cx="1596.58" cy="825.36" r="4.8" fill="#2a8dd0"/><circle cx="1589" cy="855" r="9.5" fill="#3598d3"/><circle cx="1596.58" cy="858.14" r="4.8" fill="#3598d3"/><circle cx="1592.14" cy="862.58" r="4.8" fill="#3598d3"/><circle cx="1585.86" cy="862.58" r="4.8" fill="#3598d3"/><circle cx="1581.42" cy="858.14" r="4.8" fill="#3598d3"/><circle cx="1581.42" cy="851.86" r="4.8" fill="#3598d3"/><circle cx="1585.86" cy="847.42" r="4.8" fill="#3598d3"/><circle cx="1592.14" cy="847.42" r="4.8" fill="#3598d3"/><circle cx="1596.58" cy="851.86" r="4.8" fill="#3598d3"/><path d="M1585 794H1592M1585 799H1591M1585.5 804H1592M1585.5 794L1585 804" stroke="#fff" stroke-width="1.6" fill="none" stroke-linecap="round"/><path d="M1585 824.5L1586 825.5M1592 826Q1593 831 1588.5 834" stroke="#fff" stroke-width="1.8" fill="none" stroke-linecap="round"/><circle cx="1590" cy="853" r="3" fill="none" stroke="#fff" stroke-width="1.6"/><path d="M1604 857Q1603 835 1612 818L1640 812V857Z" fill="#d3e7f8"/><path d="M1612 857L1620 846L1625 857M1630 857L1635 849L1640 857" fill="#4a86d6"/><path d="M1606 848Q1618 852 1632 846" stroke="#3a72c8" stroke-width="1" fill="none"/><path d="M1606 842Q1620 850 1640 838" stroke="#ffffff" stroke-width="2" fill="none" opacity="0.8"/><path d="M1629 850L1640 834V857H1633Z" fill="#f1d98e"/><path d="M1606 786Q1618 772 1640 770V830Q1628 826 1620 832Q1612 815 1606 786Z" fill="#e6f3fc"/><path d="M1610 790L1632 770M1604 812L1627 793M1606 828L1630 806M1614 776L1606 800L1620 788" stroke="#2f68c4" stroke-width="1.3" fill="none"/><path d="M1618 800L1624 840M1624 795L1630 835" stroke="#8cc0ee" stroke-width="2" fill="none"/><path d="M1626 800Q1627 790 1640 786V822Q1630 822 1626 812Z" fill="#fbe6da"/><path d="M1626 786L1640 779V790Q1632 792 1628 798Z" fill="#c9e3f8"/><ellipse cx="1636" cy="802.5" rx="4.3" ry="5.3" fill="#2e74cc"/><ellipse cx="1637" cy="803.5" rx="2.2" ry="3" fill="#7fc0f5"/><circle cx="1634.5" cy="800" r="1.3" fill="#fff"/><path d="M1618 818Q1630 812 1640 816V830Q1628 834 1618 826Z" fill="#eef6fd" stroke="#2d6cc2" stroke-width="1.2"/><path d="M1633 820Q1640 818 1640 826" stroke="#d8a43a" stroke-width="1.5" fill="none"/><path d="M1612 829L1626 826L1627 834L1614 837Z" fill="#fbe2d0"/><path d="M1603 832L1613 828L1615 840L1606 842Z" fill="#3a5fae"/><path d="M1593 772Q1616 763 1640 763V779Q1626 781 1613 794Q1598 786 1593 772Z" fill="#c9dcf2" stroke="#3a76c6" stroke-width="0.9"/><path d="M1607 776Q1625 771 1640 771V775Q1626 777 1613 788Z" fill="#3a6cc6"/><path d="M1611 781Q1626 775 1640 775" stroke="#dbeafa" stroke-width="1.3" fill="none"/><path d="M1625 764L1640 747V765Z" fill="#9dbbea" stroke="#3a76c6" stroke-width="0.8"/><path d="M1620 767Q1630 763 1640 763V768Q1630 768 1620 770Z" fill="#ffffff"/></svg>
</body></html>
